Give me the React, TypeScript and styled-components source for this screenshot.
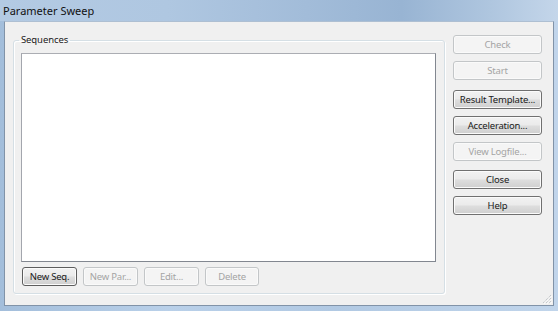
import * as React from 'react'
import styled, { createGlobalStyle, css } from 'styled-components'

const GlobalStyle = createGlobalStyle`
    html, body { margin: 0; padding: 0; background: #ffffff; }
    body { font-family: "Noto Sans", "Open Sans", sans-serif; }
`

const Window = styled.div`
    width: 558px;
    height: 311px;
    display: flex;
    flex-direction: column;
    background: linear-gradient(to right, #a3bedb 0%, #b9d0e9 30%, #b1c9e3 60%, #c1d5eb 100%);
    box-sizing: border-box;
`

const TitleBar = styled.div`
    height: 21px;
    flex: none;
    display: flex;
    align-items: center;
    padding-left: 3px;
    background: linear-gradient(to right, #b3cae3 0%, #afc7e1 30%, #a2bcd9 55%, #98b4d3 72%, #afc6df 88%, #c4d6ea 100%);
    font-size: 11px;
    color: #111;
`

const FrameBody = styled.div`
    flex: 1;
    display: flex;
    padding: 0 4px 5px 4px;
    min-height: 0;
`

const Client = styled.div`
    position: relative;
    flex: 1;
    display: flex;
    align-items: flex-start;
    gap: 8px;
    padding: 12px 0 0 8px;
    background: #f0f0f0;
    border: 1px solid #8193a8;
    border-top-color: #aebfd2;
`

const GroupBox = styled.fieldset`
    width: 432px;
    box-sizing: border-box;
    margin: 0;
    padding: 7px 8px 7px 7px;
    border: 1px solid #d5dfe5;
    border-radius: 3px;
    box-shadow: inset 1px 1px 0 #ffffff, 1px 1px 0 #ffffff;
    display: flex;
    flex-direction: column;
    gap: 5px;
`

const GroupLabel = styled.legend`
    margin-left: -2px;
    padding: 0 2px;
    font-size: 9.5px;
    letter-spacing: -0.1px;
    line-height: 12px;
    color: #1a1a1a;
`

const ListBox = styled.div`
    height: 207px;
    background: #ffffff;
    border: 1px solid #828790;
    border-top-color: #abadb3;
    border-left-color: #a3a6ad;
`

const ButtonRow = styled.div`
    display: flex;
    gap: 6px;
    padding-left: 1px;
`

const Column = styled.div`
    width: 89px;
    display: flex;
    flex-direction: column;
    padding-top: 1px;
`

const Button = styled.button<{ $width?: number; $gap?: number; $primary?: boolean }>`
    box-sizing: border-box;
    height: 19px;
    width: ${p => (p.$width ? `${p.$width}px` : '100%')};
    margin: ${p => p.$gap || 0}px 0 0 0;
    padding: 0;
    font-family: "Noto Sans", "Open Sans", sans-serif;
    font-size: 9.5px;
    letter-spacing: -0.2px;
    line-height: 17px;
    border-radius: 3px;
    color: #1a1a1a;
    border: 1px solid #707070;
    background: linear-gradient(#f2f2f2 0%, #ebebeb 45%, #dddddd 55%, #cfcfcf 100%);
    box-shadow: inset 0 0 0 1px #fbfbfb;
    ${p => p.$primary && css`
        border-color: #5d5d5d;
    `}
    &:disabled {
        color: #a4a4a4;
        border-color: #c3c6c8;
        background: #f4f4f4;
        box-shadow: inset 0 0 0 1px #fafafa;
    }
`

const Grip = styled.svg`
    position: absolute;
    right: 1px;
    bottom: 1px;
`

export default function App() {
    return (
        <>
            <GlobalStyle />
            <Window>
                <TitleBar>Parameter Sweep</TitleBar>
                <FrameBody>
                    <Client>
                        <GroupBox>
                            <GroupLabel>Sequences</GroupLabel>
                            <ListBox />
                            <ButtonRow>
                                <Button $width={55} $primary>New Seq.</Button>
                                <Button $width={55} disabled>New Par...</Button>
                                <Button $width={55} disabled>Edit...</Button>
                                <Button $width={54} disabled>Delete</Button>
                            </ButtonRow>
                        </GroupBox>
                        <Column>
                            <Button disabled>Check</Button>
                            <Button $gap={7} disabled>Start</Button>
                            <Button $gap={10}>Result Template...</Button>
                            <Button $gap={7}>Acceleration...</Button>
                            <Button $gap={7} disabled>View Logfile...</Button>
                            <Button $gap={9}>Close</Button>
                            <Button $gap={7}>Help</Button>
                        </Column>
                        <Grip width="11" height="11" viewBox="0 0 11 11">
                            <path d="M10 2 L2 10 M10 5 L5 10 M10 8 L8 10" stroke="#b3b8bd" strokeWidth="1" strokeDasharray="1 1" />
                            <path d="M11 3 L3 11 M11 6 L6 11 M11 9 L9 11" stroke="#ffffff" strokeWidth="1" strokeDasharray="1 1" />
                        </Grip>
                    </Client>
                </FrameBody>
            </Window>
        </>
    )
}
